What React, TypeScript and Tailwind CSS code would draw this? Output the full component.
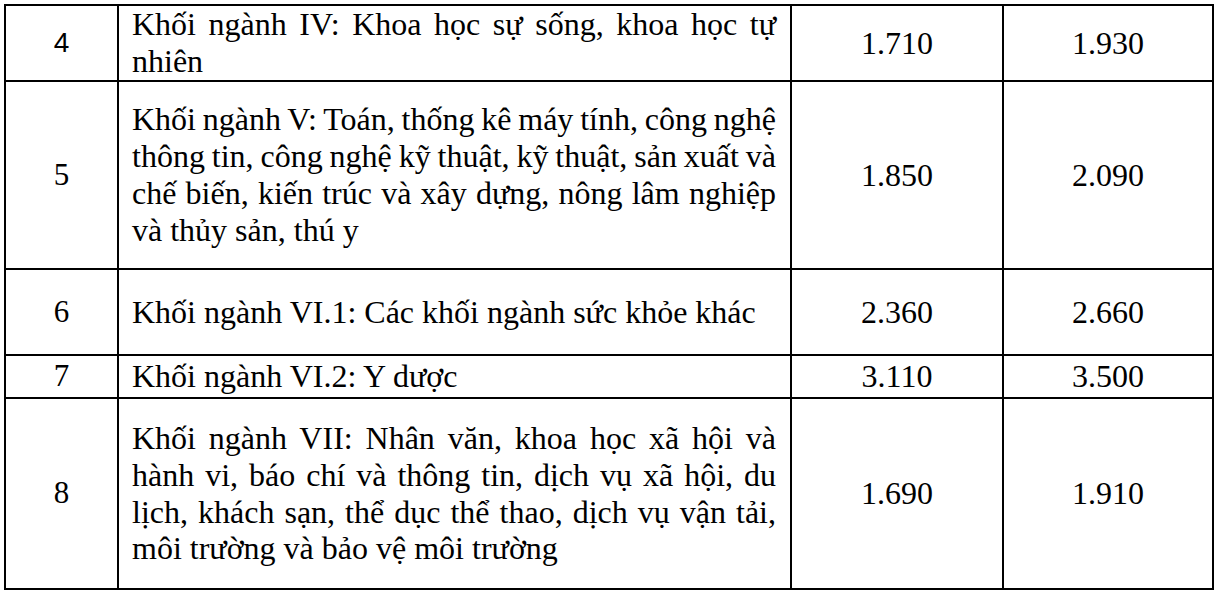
type Row = {
  no: string;
  sans?: boolean;
  lines: string[];
  a: string;
  b: string;
  h: string;
};

const rows: Row[] = [
  {
    no: '4',
    sans: true,
    lines: ['Khối ngành IV: Khoa học sự sống, khoa học tự', 'nhiên'],
    a: '1.710',
    b: '1.930',
    h: 'h-[76px]',
  },
  {
    no: '5',
    lines: [
      'Khối ngành V: Toán, thống kê máy tính, công nghệ',
      'thông tin, công nghệ kỹ thuật, kỹ thuật, sản xuất và',
      'chế biến, kiến trúc và xây dựng, nông lâm nghiệp',
      'và thủy sản, thú y',
    ],
    a: '1.850',
    b: '2.090',
    h: 'h-[188px]',
  },
  {
    no: '6',
    lines: ['Khối ngành VI.1: Các khối ngành sức khỏe khác'],
    a: '2.360',
    b: '2.660',
    h: 'h-[86px]',
  },
  {
    no: '7',
    lines: ['Khối ngành VI.2: Y dược'],
    a: '3.110',
    b: '3.500',
    h: 'h-[43px]',
  },
  {
    no: '8',
    lines: [
      'Khối ngành VII: Nhân văn, khoa học xã hội và',
      'hành vi, báo chí và thông tin, dịch vụ xã hội, du',
      'lịch, khách sạn, thể dục thể thao, dịch vụ vận tải,',
      'môi trường và bảo vệ môi trường',
    ],
    a: '1.690',
    b: '1.910',
    h: 'h-[191px]',
  },
];

export default function App() {
  return (
    <div className="w-[1220px] h-[596px] bg-white pl-[4px] pt-[4px] font-['Liberation_Serif','Times_New_Roman',serif] text-black">
      <div className="w-[1210px] border-l-2 border-t-2 border-black">
        {rows.map((r) => (
          <div key={r.no} className={`grid grid-cols-[113px_673px_212px_210px] ${r.h}`}>
            <div className="flex items-center justify-center border-r-2 border-b-2 border-black">
              <span
                className={
                  r.sans
                    ? "font-['Liberation_Sans',Arial,sans-serif] text-[28px] leading-[36.8px]"
                    : 'text-[31px] leading-[36.8px]'
                }
              >
                {r.no}
              </span>
            </div>
            <div className="flex flex-col justify-center border-r-2 border-b-2 border-black pl-[13px] pr-[14px] text-[32px] leading-[36.8px]">
              {r.lines.map((line, i) =>
                i < r.lines.length - 1 ? (
                  <span
                    key={i}
                    className="block whitespace-nowrap text-justify [text-align-last:justify] [word-spacing:-3px]"
                  >
                    {line}
                  </span>
                ) : (
                  <span key={i} className="block whitespace-nowrap">
                    {line}
                  </span>
                )
              )}
            </div>
            <div className="flex items-center justify-center border-r-2 border-b-2 border-black">
              <span className="text-[32px] leading-[36.8px]">{r.a}</span>
            </div>
            <div className="flex items-center justify-center border-r-2 border-b-2 border-black">
              <span className="text-[32px] leading-[36.8px]">{r.b}</span>
            </div>
          </div>
        ))}
      </div>
    </div>
  );
}
